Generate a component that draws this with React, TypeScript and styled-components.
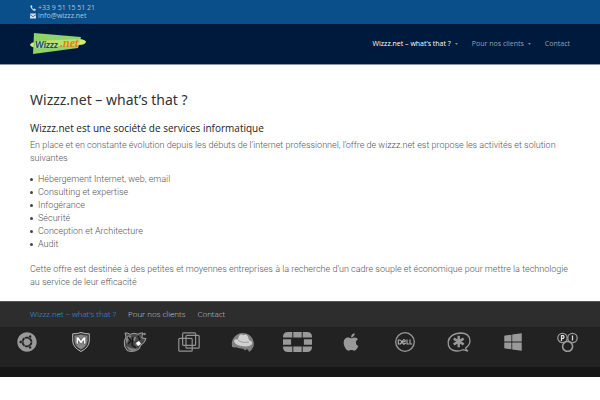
import React from "react";
import styled, { createGlobalStyle } from "styled-components";
import { FaUbuntu, FaApple, FaWindows } from "react-icons/fa";

const GlobalStyle = createGlobalStyle`
  * { box-sizing: border-box; }
  body { margin: 0; background: #fff; font-family: Roboto, sans-serif; }
`;

const Container = styled.div`
  width: 90%;
  margin: 0 auto;
`;

const TopBar = styled.div`
  background: #0a4f8a;
  padding: 4px 0;
  font: 400 7px/8px "Open Sans", sans-serif;
`;

const ContactLink = styled.a`
  display: flex;
  align-items: center;
  gap: 2px;
  width: max-content;
  height: 8px;
  color: #a9c6de;
  text-decoration: none;

  svg { width: 6px; height: 6px; fill: #d3e1ec; }
`;

const Header = styled.header`
  background: #001a3d;
  border-bottom: 1px solid #8a95a5;
`;

const HeaderRow = styled(Container)`
  display: flex;
  align-items: center;
  justify-content: space-between;
  height: 40px;
`;

const LogoLink = styled.a`
  display: block;
  height: 22px;
`;

const MainNav = styled.nav`
  display: flex;
  gap: 14px;
`;

const NavLink = styled.a<{ $active?: boolean }>`
  display: flex;
  align-items: center;
  gap: 4px;
  font: 400 7px/12px "Open Sans", sans-serif;
  color: ${(p) => (p.$active ? "#ffffff" : "#95a0b2")};
  text-decoration: none;

  svg { width: 3px; height: 2px; fill: #77849a; }
`;

const Article = styled(Container).attrs({ as: "main" })`
  padding: 26px 0 11px;
`;

const Title = styled.h1`
  margin: 0 0 13px;
  font: 400 14px/18px "Noto Sans", sans-serif;
  color: #333;
`;

const Subtitle = styled.h2`
  margin: 0 0 5px;
  font: 400 10px/12px "Open Sans", sans-serif;
  color: #222;
`;

const Paragraph = styled.p`
  margin: 0;
  font-size: 9px;
  font-weight: 300;
  line-height: 13px;
  color: #555;
`;

const Services = styled.ul`
  margin: 8px 0 12px;
  padding: 0 0 0 8px;
  font-size: 9px;
  font-weight: 300;
  line-height: 13px;
  color: #555;
  list-style: none;
`;

const Service = styled.li`
  &::before {
    content: "";
    float: left;
    width: 3px;
    height: 3px;
    margin: 5px 0 0 -8px;
    border-radius: 50%;
    background: #444;
  }
`;

const Footer = styled.footer`
  margin-top: 1px;
  background: #222;
`;

const FooterNavBar = styled.div`
  background: #2d2d2d;
  border-top: 1px solid #555;
`;

const FooterNav = styled(Container).attrs({ as: "nav" })`
  display: flex;
  gap: 12px;
  padding: 6px 0 7px;
`;

const FooterLink = styled.a<{ $active?: boolean }>`
  font: 300 8px/12px "Open Sans", sans-serif;
  color: ${(p) => (p.$active ? "#2ea3f2" : "#cccccc")};
  text-decoration: none;
`;

const Partners = styled.div`
  display: grid;
  grid-template-columns: repeat(11, 1fr);
  justify-items: center;
  padding: 5px 6px 15px 0;

  svg { display: block; height: 20px; }
`;

const BottomBar = styled.div`
  height: 10px;
  background: #161616;
`;

const G = "#999";

const Logo = () => (
  <svg width="57" height="22" viewBox="0 0 57 22" role="img" aria-label="Wizzz.net">
    <path d="M0 12 Q1 9 6 9 L50 6 Q56 7 56 9 Q55 12 49 12 L6 15 Q1 14 0 12Z" fill="#d3ee6a" />
    <path d="M4 0 L51 4 L48 15 L3 21Z" fill="#8ed36b" />
    <path d="M5 8 L50 6 L49 12 L5 15Z" fill="#b9e276" />
    <text x="5" y="15" fontSize="9" fontFamily="Lato, sans-serif" fontStyle="italic" fontWeight="900" fill="#174f86">Wizzz</text>
    <text x="30" y="14" fontSize="12" fontFamily="Liberation Serif, serif" fontStyle="italic" fontWeight="700" fill="#f07a10">.net</text>
  </svg>
);

const PhoneIcon = () => (
  <svg viewBox="0 0 12 12" aria-hidden="true">
    <path d="M1 1 L3.5 0.5 L5 4 L3.7 5 Q5 7.5 7.2 8.4 L8.3 7 L11.5 8.7 L11 11 Q9 12.3 6 10.5 Q0 7 1 1Z" />
  </svg>
);

const MailIcon = () => (
  <svg viewBox="0 0 12 12" aria-hidden="true">
    <path d="M0 1H12V2.6L6 6.6L0 2.6ZM0 4.2L6 8.2L12 4.2V11H0Z" />
  </svg>
);

const Caret = () => (
  <svg viewBox="0 0 6 4" aria-hidden="true"><path d="M0 0H6L3 4Z" /></svg>
);

const Shield = () => (
  <svg width="18" viewBox="0 0 18 20">
    <path d="M.7 1.8Q5 2 9 .5Q13 2 17.3 1.8V9Q17 15.5 9 19.5Q1 15.5 .7 9Z" fill="#303030" stroke="#bbb" />
    <path d="M2.5 3.5Q6 3.6 9 2.5Q12 3.6 15.5 3.5V9Q15 14.5 9 17.5Q3 14.5 2.5 9Z" fill="#888" />
    <path d="M4.2 12V5H6.7L9 8.4L11.3 5H13.8V12H11.6V8.6L9 12.2L6.4 8.6V12Z" fill="#fff" stroke="#333" strokeWidth=".5" />
  </svg>
);

const Daemon = () => (
  <svg width="24" viewBox="0 0 24 20">
    <path d="M2 1Q5 .5 7 2.4Q11 .2 15 2.2Q17 .5 20 1Q19 4 18.8 6L23 6.5Q22 11 18 13L16 17Q10 21 4 18.5L1.5 14Q.5 8 3 5Z" fill="#484848" stroke="#bbb" strokeWidth=".8" />
    <path d="M4 4Q8 2 8 5Q5 7 4 12Q2 8 4 4ZM9 8Q11 4 13 5L12 9ZM14 10Q18 9 17 12Q15 15 12 12ZM4 14Q8 18 15 16L11 19Q5 19 4 14Z" fill="#888" />
    <path d="M13 11L16 9L18 12L15 14Z" fill="#fff" />
    <path d="M5 5L8 9L5 12M10 5L9 13L13 16M15 4L17 8" stroke="#171717" strokeWidth="1.4" fill="none" />
    <circle cx="21.5" cy="2" r="1.3" fill="#888" />
  </svg>
);

const Squares = () => (
  <svg width="22" viewBox="0 0 22 20" fill="none" stroke="#929292" strokeWidth="1.2">
    <rect x="4.6" y=".8" width="13" height="12.6" rx="1" />
    <rect x="8" y="3.4" width="13.2" height="12.8" rx="1" />
    <rect x=".8" y="6.4" width="13.4" height="12.8" rx="1" />
  </svg>
);

const RedHat = () => (
  <svg width="24" viewBox="0 0 24 20">
    <path d="M1.2 15A11 11 0 1 1 22.5 14.5Q21 18 18 20Q17.6 17.4 15.7 17L14.3 18.5Q12.5 16 8 16.2Q4.5 14.5 3.2 15.5Z" fill="#828282" />
    <path d="M7 7.5Q8 2 10.5 2.6Q12.5 3.3 14.3 2.4Q16.7 2 18 8Q22 9.7 21 12Q19 15 12.5 14.3Q4.5 13.5 3 9.4Q3 6.8 7 7.5Z" fill="#d0d0d0" />
    <path d="M7 8Q11 11.5 18 10" fill="none" stroke="#999" strokeWidth=".9" />
  </svg>
);

const Fortinet = () => (
  <svg width="29" viewBox="0 0 29 20" fill={G}>
    <path d="M5 0H9.3V5.5H0V5Q0 0 5 0ZM10.3 0H18.7V5.5H10.3ZM19.7 0H24Q29 0 29 5V5.5H19.7ZM0 7.3H8.1V12.7H0ZM20.9 7.3H29V12.7H20.9ZM0 14.5H9.3V20H5Q0 20 0 15ZM10.3 14.5H18.7V20H10.3ZM19.7 14.5H29V15Q29 20 24 20H19.7Z" />
  </svg>
);

const Dell = () => (
  <svg width="20" viewBox="0 0 20 20">
    <circle cx="10" cy="10" r="9.3" fill="none" stroke={G} strokeWidth="1.3" />
    <g fill="none" stroke="#b0b0b0" strokeWidth="1.1">
      <path d="M3.3 8V12H4.5Q6.5 12 6.5 10Q6.5 8 4.5 8Z" />
      <path d="M10.7 8.6L8.8 7.7L6.8 10L8.8 12.2L10.9 11M7 10.4L10.6 9.3" />
      <path d="M12 7.6V12H14M15 7.6V12H17.2" />
    </g>
  </svg>
);

const Asterisk = () => (
  <svg width="24" viewBox="0 0 24 20" fill="none" stroke={G}>
    <path d="M18.5 16Q23 13 23 8.7Q22.5 1 13.5 1Q3 1.5 1.2 9.5Q.5 18.3 9.5 19Q13 19.2 15.8 17.7L21 19Q18.8 17.7 18.5 16Z" strokeWidth="1.3" />
    <path d="M11.7 3.7V15.3M6.7 6.6L16.7 12.4M16.7 6.6L6.7 12.4" strokeWidth="2.4" />
  </svg>
);

const Cluster = () => (
  <svg width="21" viewBox="0 0 21 20" fill="none" stroke={G} strokeWidth="1.3">
    <circle cx="5.5" cy="6" r="4.7" />
    <circle cx="15.5" cy="6" r="4.7" />
    <circle cx="10.6" cy="14.4" r="5" strokeWidth="1.6" />
    <path d="M4.5 9V3.6H6.5Q7.6 5 6.5 6.3H4.5M15.5 3.4V8.6" stroke="#ddd" />
  </svg>
);

const services = [
  "Hébergement Internet, web, email",
  "Consulting et expertise",
  "Infogérance",
  "Sécurité",
  "Conception et Architecture",
  "Audit",
];

export default function App() {
  return (
    <>
      <GlobalStyle />
      <TopBar>
        <Container>
          <ContactLink href="tel:+33951155121"><PhoneIcon />+33 9 51 15 51 21</ContactLink>
          <ContactLink href="mailto:info@wizzz.net"><MailIcon />info@wizzz.net</ContactLink>
        </Container>
      </TopBar>
      <Header>
        <HeaderRow>
          <LogoLink href="#"><Logo /></LogoLink>
          <MainNav>
            <NavLink href="#" $active>Wizzz.net – what’s that ? <Caret /></NavLink>
            <NavLink href="#">Pour nos clients <Caret /></NavLink>
            <NavLink href="#">Contact</NavLink>
          </MainNav>
        </HeaderRow>
      </Header>
      <Article>
        <Title>Wizzz.net – what’s that ?</Title>
        <Subtitle>Wizzz.net est une société de services informatique</Subtitle>
        <Paragraph>
          En place et en constante évolution depuis les débuts de l’internet professionnel, l’offre de wizzz.net est propose les activités et solution suivantes
        </Paragraph>
        <Services>
          {services.map((s) => <Service key={s}>{s}</Service>)}
        </Services>
        <Paragraph>
          Cette offre est destinée à des petites et moyennes entreprises à la recherche d’un cadre souple et économique pour mettre la technologie au service de leur efficacité
        </Paragraph>
      </Article>
      <Footer>
        <FooterNavBar>
          <FooterNav>
            <FooterLink href="#" $active>Wizzz.net – what’s that ?</FooterLink>
            <FooterLink href="#">Pour nos clients</FooterLink>
            <FooterLink href="#">Contact</FooterLink>
          </FooterNav>
        </FooterNavBar>
        <Partners>
          <FaUbuntu size={20} color="#999" />
          <Shield />
          <Daemon />
          <Squares />
          <RedHat />
          <Fortinet />
          <FaApple size={20} color="#999" />
          <Dell />
          <Asterisk />
          <FaWindows size={20} color="#999" />
          <Cluster />
        </Partners>
        <BottomBar />
      </Footer>
    </>
  );
}
